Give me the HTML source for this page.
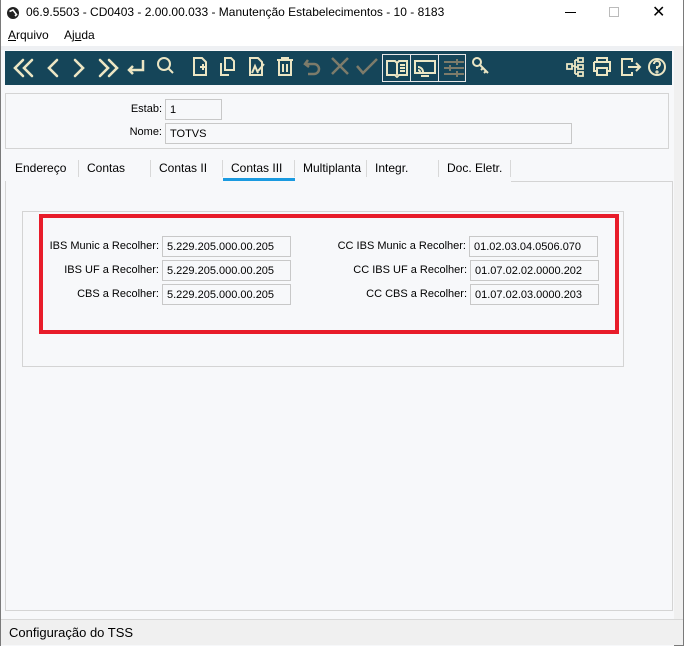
<!DOCTYPE html>
<html><head><meta charset="utf-8"><style>
*{margin:0;padding:0;box-sizing:border-box}
body{width:684px;height:646px;position:relative;background:#f0f0f0;font-family:"Liberation Sans",sans-serif;font-size:12px;color:#000;overflow:hidden}
.a{position:absolute}
.in{position:absolute;background:#f7f8fa;border:1px solid #c8c8c8;font-size:11px;padding:4px 0 0 4px;height:21px}
.lb{position:absolute;font-size:11px;text-align:right}
.tab{position:absolute;top:161px;font-size:12px}
.sep{position:absolute;top:160px;width:1px;height:17px;background:#d8d8d8}
svg.i{position:absolute;top:56px}
</style></head><body>
<div class="a" style="left:0;top:0;width:684px;height:646px;border:1px solid #7a7a7a;border-top:none"></div>
<div class="a" style="left:1px;top:0;width:682px;height:46px;background:#fff"></div>
<svg class="a" style="left:6px;top:6px" width="14" height="14"><circle cx="7" cy="7" r="6" fill="#222"/><path d="M3.5 5.5 L7 4 L10.5 8.5 L9 10" stroke="#fff" stroke-width="1.6" fill="none"/></svg>
<div class="a" style="left:26px;top:5px;font-size:12px">06.9.5503 - CD0403 - 2.00.00.033 - Manutenção Estabelecimentos - 10 - 8183</div>
<div class="a" style="left:565px;top:12px;width:11px;height:1px;background:#000"></div>
<div class="a" style="left:609px;top:7px;width:10px;height:10px;border:1px solid #bbb"></div>
<div class="a" style="left:652px;top:2px;font-size:16px;font-weight:300">✕</div>
<div class="a" style="left:8px;top:28px;font-size:12px"><u>A</u>rquivo</div>
<div class="a" style="left:64px;top:28px;font-size:12px">Aj<u>u</u>da</div>
<div class="a" style="left:1px;top:46px;width:673px;height:600px;background:#f7f8fa"></div>
<div class="a" style="left:1px;top:46px;width:673px;height:4px;background:#eef0f3"></div>
<div class="a" style="left:5px;top:51px;width:667px;height:34px;background:#154559"></div>
<svg class="i" style="left:12px;top:57px" width="110" height="22" stroke="#ece6c4" stroke-width="2.6" fill="none" stroke-linecap="round"><path d="M11 3 L3 11 L11 19 M20 3 L12 11 L20 19 M45 3 L37 11 L45 19 M63 3 L71 11 L63 19 M88 3 L96 11 L88 19 M97 3 L105 11 L97 19"/></svg>
<svg class="i" style="left:125px" width="22" height="22" stroke="#ece6c4" stroke-width="2.5" fill="none"><path d="M18 4 V14 H4 M8 10 L4 14 L8 18"/></svg>
<svg class="i" style="left:156px" width="20" height="22" stroke="#ece6c4" stroke-width="2" fill="none"><circle cx="8" cy="8" r="6"/><path d="M12 12 L17 17"/></svg>
<svg class="i" style="left:191px" width="20" height="22" stroke="#ece6c4" stroke-width="2" fill="none"><path d="M3 2 H11 L15 6 V19 H3 Z M9 11 H15 M12 8 V14"/></svg>
<svg class="i" style="left:218px" width="20" height="22" stroke="#ece6c4" stroke-width="2" fill="none"><path d="M7 2 H13 L16 5 V14 H7 Z M3 7 V19 H11"/></svg>
<svg class="i" style="left:247px" width="20" height="22" stroke="#ece6c4" stroke-width="2" fill="none"><path d="M3 2 H11 L15 6 V19 H3 Z M5 17 L8 10 L11 17 M17 8 L11 15"/></svg>
<svg class="i" style="left:275px" width="20" height="22" stroke="#ece6c4" stroke-width="2" fill="none"><path d="M2 4 H18 M7 4 V2 H13 V4 M4 4 V19 H16 V4 M8 8 V16 M12 8 V16"/></svg>
<svg class="i" style="left:302px" width="20" height="22" stroke="#7d7b6a" stroke-width="2.5" fill="none"><path d="M6 4 L3 8 L7 11 M3 8 H12 A5 5 0 0 1 12 18 H6"/></svg>
<svg class="i" style="left:330px" width="20" height="22" stroke="#7d7b6a" stroke-width="2.5" fill="none"><path d="M2 2 L18 18 M18 2 L2 18"/></svg>
<svg class="i" style="left:355px" width="24" height="22" stroke="#7d7b6a" stroke-width="2.5" fill="none"><path d="M2 10 L8 17 L22 3"/></svg>
<div class="a" style="left:382px;top:54px;width:84px;height:28px;border:1px solid #e8e8e8"></div>
<div class="a" style="left:410px;top:54px;width:1px;height:28px;background:#e8e8e8"></div>
<div class="a" style="left:438px;top:54px;width:1px;height:28px;background:#e8e8e8"></div>
<svg class="i" style="left:385px;top:58px" width="24" height="20" stroke="#ece6c4" stroke-width="2" fill="none"><path d="M2 3 H10 L12 5 L14 3 H22 V17 H14 L12 19 L10 17 H2 Z M12 5 V17 M15 7 H20 M15 10 H20 M15 13 H20"/></svg>
<svg class="i" style="left:413px;top:58px" width="24" height="20" stroke="#ece6c4" stroke-width="2" fill="none"><path d="M2 3 H22 V15 H2 Z M8 18 H16 M5 9 A5 5 0 0 1 10 14 M5 12 A2 2 0 0 1 7 14"/></svg>
<svg class="i" style="left:442px;top:58px" width="24" height="20" stroke="#7d7b6a" stroke-width="2" fill="none"><path d="M2 4 H22 M2 10 H22 M2 16 H22 M15 1 V7 M8 7 V13 M15 13 V19"/></svg>
<svg class="i" style="left:471px" width="20" height="22" stroke="#ece6c4" stroke-width="2" fill="none"><circle cx="6" cy="6" r="4"/><path d="M9 9 L17 17 M12 12 L10 14 M15 15 L13 17"/></svg>
<svg class="i" style="left:565px" width="20" height="22" stroke="#ece6c4" stroke-width="1.8" fill="none"><path d="M2 8 H7 V13 H2 Z M13 2 H18 V6 H13 Z M13 9 H18 V13 H13 Z M13 16 H18 V20 H13 Z M7 10 H10 M10 4 V18 M10 4 H13 M10 11 H13 M10 18 H13"/></svg>
<svg class="i" style="left:591px" width="22" height="22" stroke="#ece6c4" stroke-width="2" fill="none"><path d="M6 6 V2 H16 V6 M3 6 H19 V15 H16 M6 15 H3 V6 M6 12 H16 V19 H6 Z"/></svg>
<svg class="i" style="left:620px" width="22" height="22" stroke="#ece6c4" stroke-width="2" fill="none"><path d="M12 6 V3 H2 V19 H12 V16 M8 11 H20 M16 7 L20 11 L16 15"/></svg>
<svg class="i" style="left:647px" width="20" height="22" stroke="#ece6c4" stroke-width="2" fill="none"><circle cx="10" cy="11" r="8"/><path d="M7 8 A3 3 0 1 1 10 11 V13"/><circle cx="10" cy="16" r="0.6"/></svg>
<div class="a" style="left:5px;top:93px;width:664px;height:56px;border:1px solid #d4d4d4"></div>
<div class="lb" style="left:100px;top:103px;width:62px">Estab:</div>
<div class="in" style="left:165px;top:99px;width:57px">1</div>
<div class="lb" style="left:100px;top:126px;width:62px">Nome:</div>
<div class="in" style="left:165px;top:123px;width:407px">TOTVS</div>
<div class="tab" style="left:15px">Endereço</div><div class="sep" style="left:78px"></div>
<div class="tab" style="left:87px">Contas</div><div class="sep" style="left:150px"></div>
<div class="tab" style="left:159px">Contas II</div><div class="sep" style="left:222px"></div>
<div class="tab" style="left:231px">Contas III</div>
<div class="a" style="left:223px;top:178px;width:72px;height:3px;background:#1a9ae0"></div>
<div class="sep" style="left:294px"></div>
<div class="tab" style="left:303px">Multiplanta</div><div class="sep" style="left:366px"></div>
<div class="tab" style="left:375px">Integr.</div><div class="sep" style="left:438px"></div>
<div class="tab" style="left:447px">Doc. Eletr.</div><div class="sep" style="left:510px"></div>
<div class="a" style="left:5px;top:181px;width:668px;height:1px;background:#d4d4d4;clip-path:inset(0 0 0 506px)"></div>
<div class="a" style="left:5px;top:181px;width:668px;height:430px;border-left:1px solid #d4d4d4;border-right:1px solid #d4d4d4;border-bottom:1px solid #d4d4d4"></div>
<div class="a" style="left:22px;top:211px;width:602px;height:156px;border:1px solid #d4d4d4"></div>
<div class="a" style="left:39px;top:214px;width:580px;height:120px;border:4px solid #e81c2a"></div>
<div class="lb" style="left:40px;top:240px;width:119px">IBS Munic a Recolher:</div>
<div class="in" style="left:162px;top:236px;width:129px">5.229.205.000.00.205</div>
<div class="lb" style="left:40px;top:264px;width:119px">IBS UF a Recolher:</div>
<div class="in" style="left:162px;top:260px;width:129px">5.229.205.000.00.205</div>
<div class="lb" style="left:40px;top:288px;width:119px">CBS a Recolher:</div>
<div class="in" style="left:162px;top:284px;width:129px">5.229.205.000.00.205</div>
<div class="lb" style="left:300px;top:240px;width:166px">CC IBS Munic a Recolher:</div>
<div class="in" style="left:469px;top:236px;width:129px">01.02.03.04.0506.070</div>
<div class="lb" style="left:300px;top:264px;width:167px">CC IBS UF a Recolher:</div>
<div class="in" style="left:470px;top:260px;width:129px">01.07.02.02.0000.202</div>
<div class="lb" style="left:300px;top:288px;width:167px">CC CBS a Recolher:</div>
<div class="in" style="left:470px;top:284px;width:129px">01.07.02.03.0000.203</div>
<div class="a" style="left:674px;top:46px;width:9px;height:575px;background:#f0f0f0"></div>
<div class="a" style="left:1px;top:619px;width:682px;height:26px;background:#f0f0f0;border-top:1px solid #d8d8d8"></div>
<div class="a" style="left:9px;top:625px;font-size:13px">Configuração do TSS</div>
</body></html>
